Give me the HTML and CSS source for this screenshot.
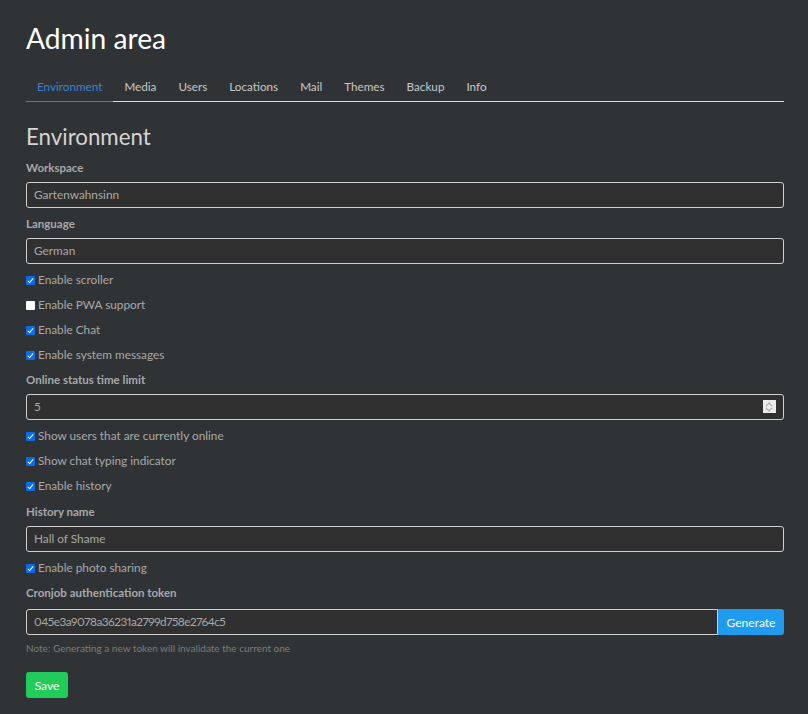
FILE: index.html
```html
<!DOCTYPE html>
<html>
<head>
<meta charset="utf-8">
<link rel="stylesheet" href="styles.css">
</head>
<body>
<div class="page">
  <h1 class="title">Admin area</h1>
  <nav class="tabs">
    <a class="tab active">Environment</a>
    <a class="tab">Media</a>
    <a class="tab">Users</a>
    <a class="tab">Locations</a>
    <a class="tab">Mail</a>
    <a class="tab">Themes</a>
    <a class="tab">Backup</a>
    <a class="tab">Info</a>
  </nav>
  <h2 class="section">Environment</h2>
  <div class="form">
    <div class="label">Workspace</div>
    <div class="field">Gartenwahnsinn</div>
    <div class="label">Language</div>
    <div class="field">German</div>
    <div class="check"><span class="box on"></span>Enable scroller</div>
    <div class="check"><span class="box"></span>Enable PWA support</div>
    <div class="check"><span class="box on"></span>Enable Chat</div>
    <div class="check"><span class="box on"></span>Enable system messages</div>
    <div class="label">Online status time limit</div>
    <div class="field number">5<span class="spin"></span></div>
    <div class="check"><span class="box on"></span>Show users that are currently online</div>
    <div class="check"><span class="box on"></span>Show chat typing indicator</div>
    <div class="check"><span class="box on"></span>Enable history</div>
    <div class="label late">History name</div>
    <div class="field">Hall of Shame</div>
    <div class="check"><span class="box on"></span>Enable photo sharing</div>
    <div class="label wide">Cronjob authentication token</div>
    <div class="group">
      <div class="field grow token">045e3a9078a36231a2799d758e2764c5</div>
      <button class="btn blue">Generate</button>
    </div>
    <div class="note">Note: Generating a new token will invalidate the current one</div>
    <div class="actions"><button class="btn green">Save</button></div>
  </div>
</div>
</body>
</html>
```
FILE: styles.css
```css
* { box-sizing: border-box; }
html, body { margin: 0; padding: 0; background: #303336; }
body { font-family: Lato, "Open Sans", sans-serif; color: #b4b4b4; }
.page { padding: 21px 24px 0 26px; }
.title { margin: 0; font-size: 28.2px; line-height: 34px; font-weight: 400; color: #ffffff; }
.tabs { display: flex; margin-top: 17px; border-bottom: 1px solid #dcdcdc; }
.tab { padding: 6px 11px 7px; font-size: 11.7px; line-height: 16px; color: #c8c8c8; }
.tab.active { color: #3b82d6; border-bottom: 1px solid #3b7fd8; margin-bottom: -1px; }
.section { margin: 22px 0 10px; font-size: 22.3px; line-height: 26px; font-weight: 400; color: #d4d4d4; }
.form { display: flex; flex-direction: column; }
.label { font-size: 11.5px; line-height: 16px; font-weight: 700; color: #a8a8a8; margin-bottom: 6px; }
.label.late { margin-top: 1px; }
.label.wide { margin-bottom: 8px; }
.field { height: 26px; border: 1px solid #d0d0d0; border-radius: 3px; background: #313030; padding: 0 7px; font-size: 11.8px; line-height: 24px; color: #a8a8a8; margin-bottom: 8px; }
.token { font-variant-numeric: proportional-nums; letter-spacing: -0.5px; }
.number { position: relative; }
.spin { position: absolute; right: 7px; top: 5px; width: 13px; height: 13px; background: #ececec; }
.spin::before { content: ""; position: absolute; left: 3px; top: 2px; width: 5px; height: 5px; border-left: 1px solid #999; border-top: 1px solid #999; transform: translateY(1px) rotate(45deg) scale(0.8); }
.spin::after { content: ""; position: absolute; left: 3px; top: 5px; width: 5px; height: 5px; border-right: 1px solid #999; border-bottom: 1px solid #999; transform: rotate(45deg) scale(0.8); }
.check { display: flex; align-items: center; font-size: 11.8px; line-height: 16px; color: #a8a8a8; margin-bottom: 9px; }
.box { width: 9px; height: 9px; margin-right: 3px; background: #ffffff; border-radius: 1px; position: relative; }
.box.on { background: #0b6ce8; }
.box.on::after { content: ""; position: absolute; left: 3px; top: 1px; width: 2px; height: 5px; border-right: 1.5px solid #fff; border-bottom: 1.5px solid #fff; transform: rotate(40deg); }
.group { display: flex; margin-bottom: 8px; }
.group .field { margin-bottom: 0; border-radius: 3px 0 0 3px; }
.grow { flex: 1; }
.btn { border: 0; font-family: inherit; font-size: 12px; color: #fff; border-radius: 3px; }
.blue { background: #1f9cf0; width: 66px; height: 26px; border-radius: 0 3px 3px 0; }
.note { font-size: 10px; line-height: 14px; color: #7c7c7c; margin-top: -2px; }
.actions { margin-top: 17px; }
.green { background: #22cc5a; width: 42px; height: 26px; }
```
